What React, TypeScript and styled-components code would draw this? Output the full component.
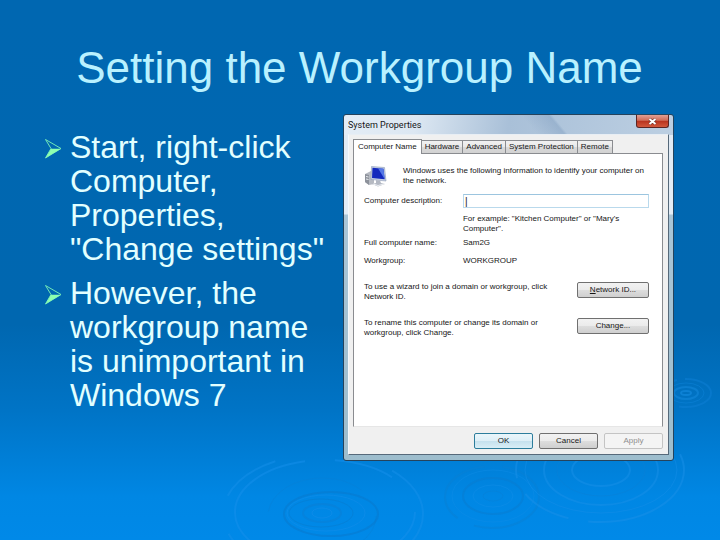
import React from "react";
import styled, { createGlobalStyle } from "styled-components";

const GlobalStyle = createGlobalStyle`
  * { box-sizing: border-box; }
  body { margin: 0; font-family: "Liberation Sans", Arial, sans-serif; }
  button, input { font-family: inherit; }
`;

const Slide = styled.main`
  position: relative;
  isolation: isolate;
  overflow: hidden;
  min-height: 100vh;
  padding: 44px 46px 48px 45px;
  background: linear-gradient(#0067b1 0%, #0067b0 60%, #0074c6 76%, #0087e4 92%, #0089e8 100%);
`;

const Ripples = styled.svg`
  position: absolute;
  right: 0;
  bottom: 0;
  z-index: -1;
  fill: none;
`;

const Title = styled.h1`
  margin: 0 0 22px;
  color: #b9f1ff;
  font-size: 44px;
  line-height: 48px;
  font-weight: 400;
  text-align: center;
`;

const Columns = styled.div`
  display: grid;
  grid-template-columns: minmax(0, 9fr) minmax(0, 10fr);
  align-items: start;
`;

const Bullets = styled.ul`
  display: flex;
  flex-direction: column;
  gap: 10px;
  margin: 0;
  padding: 16px 16px 0 0;
  list-style: none;
`;

const Bullet = styled.li`
  display: flex;
  gap: 8px;
  color: #e2ffff;
  font-size: 32px;
  line-height: 34px;
`;

const BulletMark = styled.svg`
  flex: none;
  margin-top: 9px;
`;

const Dialog = styled.section`
  display: flex;
  flex-direction: column;
  padding: 0 4px 5px;
  border: 1px solid #25435c;
  border-radius: 3px;
  background:
    linear-gradient(50deg, #ffffff00 56%, #7f9dbf70 64%, #ffffff00 65%) 0 0 / 100% 20px no-repeat,
    linear-gradient(100deg, #e4edf6 0%, #dce7f2 22%, #a9c0d8 50%, #bccfe2 100%) 0 0 / 100% 20px no-repeat,
    linear-gradient(#e0eaf4 0px, #e4edf6 99px, #a9c5d7 100px, #9dbdcd 100%);
  color: #161616;
  font-size: 8px;
  line-height: 10px;
`;

const TitleBar = styled.header`
  display: flex;
  justify-content: space-between;
  align-items: flex-start;
  height: 19px;
`;

const Caption = styled.h2`
  margin: 0;
  padding-top: 4px;
  font-family: Roboto, sans-serif;
  font-size: 9px;
  line-height: 12px;
  font-weight: 400;
`;

const CloseButton = styled.button`
  display: grid;
  place-items: center;
  width: 33px;
  height: 13px;
  padding: 0;
  border: 1px solid #5b2523;
  border-top: 0;
  border-radius: 0 0 3px 3px;
  background: linear-gradient(#e0a094 0%, #cf6b57 45%, #b8321d 50%, #d2583c 100%);
`;

const Client = styled.div`
  padding: 4px 5px 5px 4px;
  border: 1px solid #56697a;
  border-top-color: #e8eef4;
  border-left-color: #f6f9fc;
  background: #f0f0f0;
`;

const TabList = styled.div`
  display: flex;
  align-items: flex-end;
`;

const Tab = styled.button<{ $active?: boolean }>`
  height: ${(p) => (p.$active ? 15 : 13)}px;
  margin-bottom: ${(p) => (p.$active ? -1 : 0)}px;
  padding: 0 ${(p) => (p.$active ? 4 : 3)}px;
  border: 1px solid #8a8c90;
  border-bottom: 0;
  border-left-width: ${(p) => (p.$active ? 1 : 0)}px;
  background: ${(p) => (p.$active ? "#fff" : "linear-gradient(#f1f1f1 0%, #e9e9e9 48%, #d9d9d9 52%, #d2d2d2 100%)")};
  color: #161616;
  font-size: 8px;
  line-height: 12px;
  white-space: nowrap;
`;

const Panel = styled.div`
  display: flex;
  flex-direction: column;
  min-height: 274px;
  padding: 12px 13px 12px 10px;
  border: 1px solid #8a8c90;
  border-bottom-color: #e6e6e6;
  background: #fff;
`;

const Intro = styled.div`
  display: flex;
  gap: 16px;
  margin-bottom: 7px;
`;

const Text = styled.p`
  margin: 0;
`;

const Fields = styled.dl`
  display: grid;
  grid-template-columns: 99px minmax(0, 1fr);
  row-gap: 8px;
  margin: 4px 0 16px;
`;

const Term = styled.dt``;

const Value = styled.dd`
  margin: 0;
`;

const DescriptionRow = styled.div`
  display: grid;
  grid-template-columns: 99px minmax(0, 1fr);
  align-items: center;
`;

const DescriptionInput = styled.input`
  width: 100%;
  height: 14px;
  padding: 0 1px;
  border: 1px solid #b9d9ec;
  border-top-color: #9cc5df;
  background: #fff;
  color: #161616;
  font-size: 10px;
  line-height: 12px;
  outline: none;
`;

const Hint = styled.p`
  margin: 6px 0 0 99px;
`;

const ActionRow = styled.div`
  display: flex;
  justify-content: space-between;
  align-items: flex-start;
  gap: 16px;
  min-height: 20px;
  margin-bottom: 16px;
`;

const ActionText = styled.p`
  max-width: 188px;
  margin: 0;
`;

const Button = styled.button<{ $wide?: boolean; $primary?: boolean }>`
  width: ${(p) => (p.$wide ? 72 : 59)}px;
  height: 16px;
  padding: 0;
  border: 1px solid ${(p) => (p.$primary ? "#2c7d9c" : "#707070")};
  border-radius: 2px;
  background: ${(p) =>
    p.$primary
      ? "linear-gradient(#eaf6fb 0%, #deeff7 48%, #c5e1ee 52%, #d9eef6 100%)"
      : "linear-gradient(#f2f2f2 0%, #ebebeb 48%, #dddddd 52%, #cfcfcf 100%)"};
  color: #161616;
  font-size: 8px;
  line-height: 12px;

  &:disabled {
    border-color: #c4c4c4;
    background: #f4f4f4;
    color: #8f8f8f;
  }
`;

const Footer = styled.footer`
  display: flex;
  justify-content: flex-end;
  gap: 6px;
  padding-top: 6px;
`;

const Arrow = () => (
  <BulletMark width="17" height="20" viewBox="0 0 17 20" aria-hidden="true">
    <path d="M0.5 0.5 16 9.5 0.5 19 6 9.5Z" fill="none" stroke="#6fe8b8" strokeWidth="1" />
    <path d="M6 9.8H16L0.5 19Z" fill="#8dffb0" />
  </BulletMark>
);

const IconBox = styled.svg`
  flex: none;
`;

const ComputerIcon = () => (
  <IconBox width="23" height="21" viewBox="0 0 23 21" aria-hidden="true">
    <path d="M1 8 7 5 10 7V18L5 19 1 16Z" fill="#b6bac2" />
    <path d="M1 8 5 9V19L1 16Z" fill="#8d929b" />
    <path d="M2 10.5 4.500 11M2 13 4.500 13.500" stroke="#e9ecef" />
    <path d="M7.500 .5 20.500 1.500 22 15 7 13.500Z" fill="#c6d0e4" stroke="#8c9ab6" strokeWidth=".6" />
    <path d="M8.500 1.700 19.500 2.700 20.700 13.300 8 12Z" fill="#1328bd" />
    <path d="M14 2.200 19.500 2.700 20.700 13.300Z" fill="#5578e6" />
    <path d="M12 14 16 14.500 17 17 21 18 14 20.500 8 18 12 17Z" fill="#b3b8c3" />
    <path d="M9 18 14 19.500 20 18" stroke="#eef1f5" fill="none" />
  </IconBox>
);

type Ring = [number, number, number, number, string, number, string?];

const rings: Ring[] = [
  [323, 514, 100, 60, "#168fea", 2, "90 14 130 40 60 120"],
  [325, 512, 90, 52, "#1690eb", 2, "60 120 140 30"],
  [322, 516, 54, 38, "#087fd5", 1, "110 40"],
  [331, 514, 47, 22, "#0878cb", 2],
  [326, 513, 39, 18, "#168eea", 1],
  [321, 513, 32, 14, "#0879cc", 1],
  [322, 513, 19, 9, "#097ed4", 2],
  [322, 513, 10, 5, "#178eea", 1],
  [492, 497, 47, 31, "#087fd4", 2, "80 18"],
  [493, 496, 41, 26, "#0e8be6", 1],
  [493, 496, 30, 18, "#087bcf", 2],
  [493, 496, 20, 11, "#128de8", 1],
  [493, 496, 10, 5, "#0880d5", 1],
  [600, 470, 84, 52, "#1990e8", 2, "120 20 50 18"],
  [601, 470, 76, 43, "#168ee8", 1],
  [601, 470, 57, 35, "#188fe7", 2],
  [601, 470, 44, 26, "#0a7fd5", 1],
  [601, 470, 29, 16, "#188fe7", 2],
  [686, 393, 25, 14, "#0d80d5", 2, "38 8"],
  [686, 393, 18, 10, "#0d83da", 1],
  [686, 393, 12, 6, "#168be0", 2],
  [686, 393, 5, 2, "#1a91e8", 2],
];

const tabs = ["Computer Name", "Hardware", "Advanced", "System Protection", "Remote"];

export default function App() {
  return (
    <>
      <GlobalStyle />
      <Slide>
        <Ripples width="720" height="540" viewBox="0 0 720 540" aria-hidden="true">
          {rings.map(([cx, cy, rx, ry, color, width, dash], i) => (
            <ellipse
              key={i}
              cx={cx}
              cy={cy}
              rx={rx}
              ry={ry}
              stroke={color}
              strokeWidth={width}
              strokeDasharray={dash}
              opacity=".5"
            />
          ))}
        </Ripples>
        <Title>Setting the Workgroup Name</Title>
        <Columns>
          <Bullets>
            <Bullet>
              <Arrow />
              <span>Start, right-click Computer, Properties, "Change settings"</span>
            </Bullet>
            <Bullet>
              <Arrow />
              <span>However, the workgroup name is unimportant in Windows 7</span>
            </Bullet>
          </Bullets>
          <Dialog aria-labelledby="caption">
            <TitleBar>
              <Caption id="caption">System Properties</Caption>
              <CloseButton aria-label="Close">
                <svg width="9" height="7" viewBox="0 0 9 7" aria-hidden="true">
                  <path d="M1.500 1 7.500 6M7.500 1 1.500 6" stroke="#6b2a22" strokeWidth="3" />
                  <path d="M1.500 1 7.500 6M7.500 1 1.500 6" stroke="#fff" strokeWidth="2" />
                </svg>
              </CloseButton>
            </TitleBar>
            <Client>
              <TabList role="tablist">
                {tabs.map((name, i) => (
                  <Tab key={name} role="tab" aria-selected={i === 0} $active={i === 0}>
                    {name}
                  </Tab>
                ))}
              </TabList>
              <Panel role="tabpanel">
                <Intro>
                  <ComputerIcon />
                  <Text>Windows uses the following information to identify your computer on the network.</Text>
                </Intro>
                <DescriptionRow>
                  <label htmlFor="description">Computer description:</label>
                  <DescriptionInput id="description" defaultValue="|" />
                </DescriptionRow>
                <Hint>For example: "Kitchen Computer" or "Mary's Computer".</Hint>
                <Fields>
                  <Term>Full computer name:</Term>
                  <Value>Sam2G</Value>
                  <Term>Workgroup:</Term>
                  <Value>WORKGROUP</Value>
                </Fields>
                <ActionRow>
                  <ActionText>To use a wizard to join a domain or workgroup, click Network ID.</ActionText>
                  <Button $wide>
                    <u>N</u>etwork ID...
                  </Button>
                </ActionRow>
                <ActionRow>
                  <ActionText>To rename this computer or change its domain or workgroup, click Change.</ActionText>
                  <Button $wide>Change...</Button>
                </ActionRow>
              </Panel>
              <Footer>
                <Button $primary>OK</Button>
                <Button>Cancel</Button>
                <Button disabled>Apply</Button>
              </Footer>
            </Client>
          </Dialog>
        </Columns>
      </Slide>
    </>
  );
}
